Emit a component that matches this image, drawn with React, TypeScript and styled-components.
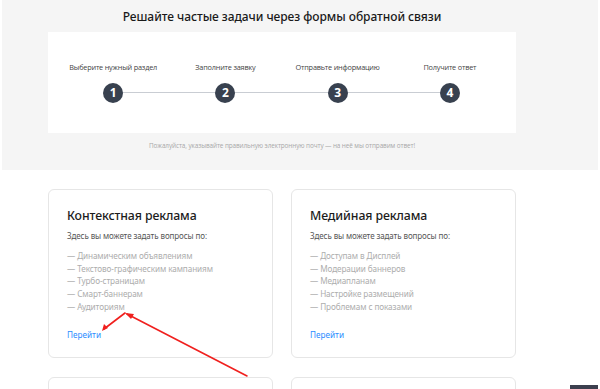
import React from "react";
import styled, { createGlobalStyle } from "styled-components";

const Global = createGlobalStyle`
  html, body { margin: 0; padding: 0; background: #fff; }
  body { width: 600px; height: 389px; overflow: hidden; position: relative; }
  * { box-sizing: border-box; }
`;

const Page = styled.div`
  width: 600px;
  height: 389px;
  padding: 0 2px;
  position: relative;
  overflow: hidden;
`;

const Hero = styled.section`
  background: #f5f5f5;
  height: 170px;
  padding: 0 82px 0 46px;
  display: flex;
  flex-direction: column;
  align-items: stretch;
`;

const Title = styled.h1`
  margin: 0;
  height: 32px;
  line-height: 34px;
  font-family: "Noto Sans", "Open Sans", sans-serif;
  font-weight: 500;
  font-size: 12px;
  color: #1a1a1a;
  text-align: center;
  letter-spacing: -0.05px;
`;

const StepsBox = styled.div`
  background: #fff;
  height: 101px;
  padding: 30px 10px 0 9px;
`;

const StepsRow = styled.ol`
  list-style: none;
  margin: 0;
  padding: 0;
  display: grid;
  grid-template-columns: repeat(4, 1fr);
  position: relative;
  &::before {
    content: "";
    position: absolute;
    left: 56px;
    right: 56px;
    top: 30px;
    height: 1px;
    background: #c9cdd3;
  }
`;

const Step = styled.li`
  display: flex;
  flex-direction: column;
  align-items: center;
  gap: 11px;
  position: relative;
`;

const StepLabel = styled.span`
  font-family: "Open Sans", sans-serif;
  font-size: 7.3px;
  line-height: 10px;
  color: #444;
  letter-spacing: -0.2px;
  white-space: nowrap;
`;

const StepNum = styled.span`
  width: 20px;
  height: 20px;
  border-radius: 50%;
  background: #38414f;
  color: #fff;
  font-family: "Open Sans", sans-serif;
  font-weight: 700;
  font-size: 12px;
  line-height: 20px;
  text-align: center;
`;

const Note = styled.p`
  margin: 0;
  padding-top: 9px;
  font-family: "Open Sans", sans-serif;
  font-size: 6.4px;
  line-height: 8px;
  color: #a8a8a8;
  text-align: center;
  letter-spacing: -0.1px;
`;

const Cards = styled.div`
  display: grid;
  grid-template-columns: 225px 225px;
  column-gap: 18px;
  row-gap: 19px;
  padding: 19px 0 0 46px;
`;

const Card = styled.article`
  height: 169px;
  border: 1px solid #e6e6e6;
  border-radius: 6px;
  padding: 17px 0 0 18px;
  font-family: "Noto Sans", "Open Sans", sans-serif;
`;

const CardTitle = styled.h2`
  margin: 0;
  font-weight: 500;
  font-size: 12.3px;
  line-height: 17px;
  color: #1c1c1c;
  letter-spacing: -0.1px;
`;

const CardLead = styled.p`
  margin: 6px 0 0;
  font-size: 8px;
  line-height: 12px;
  color: #555;
  letter-spacing: -0.1px;
`;

const Topics = styled.ul`
  list-style: none;
  margin: 8px 0 0;
  padding: 0;
`;

const Topic = styled.li`
  font-size: 8.2px;
  line-height: 12.7px;
  color: #adadad;
  letter-spacing: -0.1px;
`;

const GoLink = styled.a`
  display: inline-block;
  margin-top: 15px;
  font-size: 8.2px;
  line-height: 12px;
  color: #2a8cff;
  text-decoration: none;
`;

const Arrows = styled.svg`
  position: absolute;
  left: 0;
  top: 0;
  pointer-events: none;
`;

const DockBar = styled.div`
  position: absolute;
  right: 2px;
  bottom: 0;
  width: 28px;
  height: 4px;
  background: #3c3f4e;
`;

const steps = [
  "Выберите нужный раздел",
  "Заполните заявку",
  "Отправьте информацию",
  "Получите ответ",
];

const cards = [
  {
    title: "Контекстная реклама",
    topics: [
      "Динамическим объявлениям",
      "Текстово-графическим кампаниям",
      "Турбо-страницам",
      "Смарт-баннерам",
      "Аудиториям",
    ],
  },
  {
    title: "Медийная реклама",
    topics: [
      "Доступам в Дисплей",
      "Модерации баннеров",
      "Медиапланам",
      "Настройке размещений",
      "Проблемам с показами",
    ],
  },
];

export default function App() {
  return (
    <Page>
      <Global />
      <Hero>
        <Title>Решайте частые задачи через формы обратной связи</Title>
        <StepsBox>
          <StepsRow>
            {steps.map((s, i) => (
              <Step key={s}>
                <StepLabel>{s}</StepLabel>
                <StepNum>{i + 1}</StepNum>
              </Step>
            ))}
          </StepsRow>
        </StepsBox>
        <Note>
          Пожалуйста, указывайте правильную электронную почту — на неё мы отправим ответ!
        </Note>
      </Hero>
      <Cards>
        {cards.map((c) => (
          <Card key={c.title}>
            <CardTitle>{c.title}</CardTitle>
            <CardLead>Здесь вы можете задать вопросы по:</CardLead>
            <Topics>
              {c.topics.map((t) => (
                <Topic key={t}>— {t}</Topic>
              ))}
            </Topics>
            <GoLink href="#">Перейти</GoLink>
          </Card>
        ))}
        <Card />
        <Card />
      </Cards>
      <Arrows width="600" height="389" viewBox="0 0 600 389">
        <g stroke="#f0201e" strokeWidth="1.6" fill="none" strokeLinecap="round">
          <line x1="247" y1="376" x2="127" y2="314" />
          <line x1="125" y1="313" x2="104" y2="329" />
        </g>
        <g fill="#f0201e">
          <polygon points="125,313 134,314 131,319" />
          <polygon points="102,331 104,324 108,328" />
        </g>
      </Arrows>
      <DockBar />
    </Page>
  );
}
